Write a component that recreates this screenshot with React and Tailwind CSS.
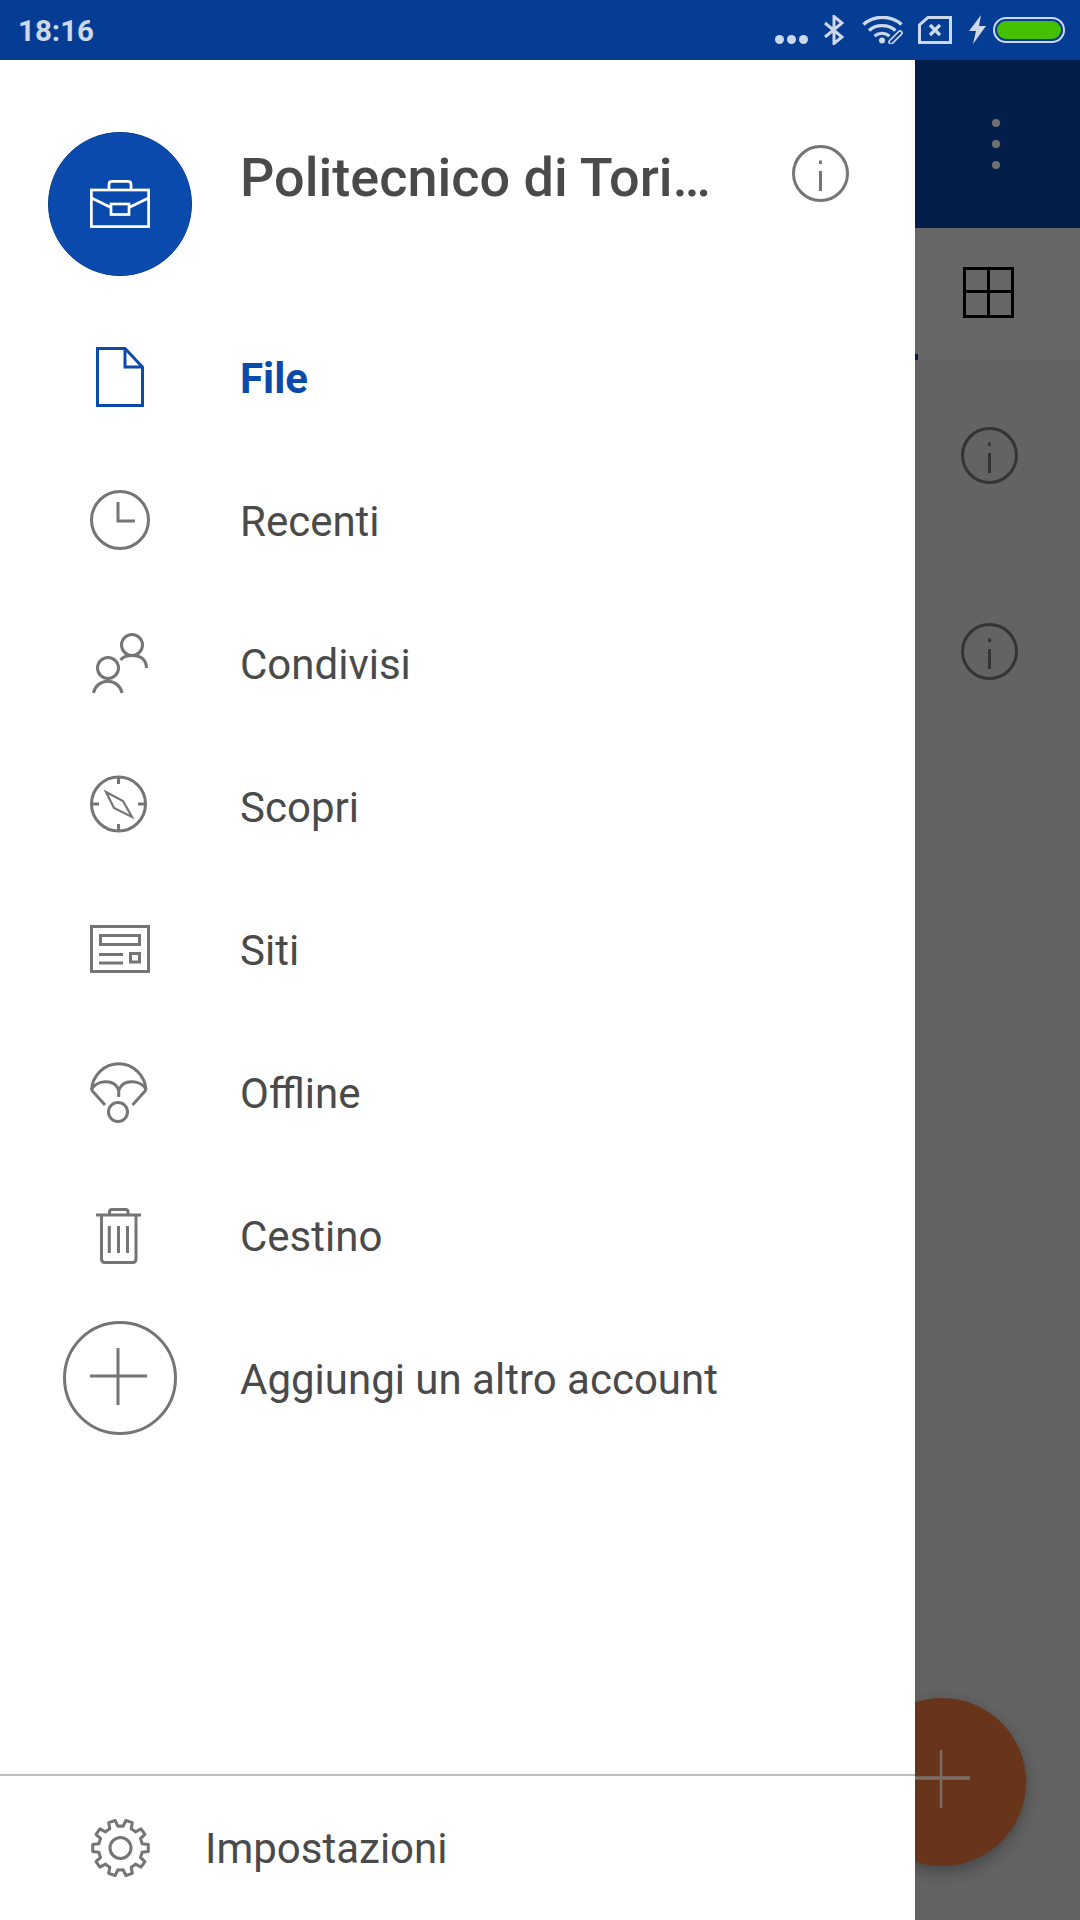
const S = "#757575";

function Ico({ children, stroke = S, sw = 3 }) {
  return (
    <svg viewBox="0 0 144 143" width="144" height="143" fill="none" stroke={stroke} strokeWidth={sw} className="ml-[48px] block shrink-0">
      {children}
    </svg>
  );
}

function gearPath(cx, cy, ro, ri) {
  const pts = [];
  for (let k = 0; k < 10; k++) {
    const c = k * 36 + 18 - 90;
    [[-18, ri], [-11, ri], [-7, ro], [7, ro], [11, ri]].forEach(([d, r]) => {
      const a = ((c + d) * Math.PI) / 180;
      pts.push(`${(cx + r * Math.cos(a)).toFixed(2)} ${(cy + r * Math.sin(a)).toFixed(2)}`);
    });
  }
  return "M" + pts.join("L") + "Z";
}

const items = [
  { label: "File", active: true, icon: (
    <Ico stroke="#0a4aad" sw={3}>
      <path d="M49.5 41.5H77L94.5 60V98.5H49.5Z" />
      <path d="M77 41.5V60H94.5" />
    </Ico>) },
  { label: "Recenti", icon: (
    <Ico>
      <circle cx="72" cy="70" r="28.5" />
      <path d="M70 52V71H87" />
    </Ico>) },
  { label: "Condivisi", icon: (
    <Ico>
      <circle cx="84" cy="52" r="10.5" />
      <path d="M72.5 67Q76 62.5 84 62.5Q98 62.5 98.5 75" />
      <circle cx="60" cy="75" r="10.5" />
      <path d="M45.5 100A14.5 14.5 0 0 1 74 100" />
    </Ico>) },
  { label: "Scopri", icon: (
    <Ico>
      <circle cx="70.5" cy="68" r="27" />
      <path d="M70.5 41V48M70.5 88V96M43.5 68H51M90 68H98" />
      <path d="M58 56L75 65L84 81L66 72Z" strokeWidth="2.2" />
    </Ico>) },
  { label: "Siti", icon: (
    <Ico sw={3}>
      <rect x="43.5" y="47.5" width="57" height="45" />
      <rect x="52.5" y="56.5" width="39" height="9" />
      <path d="M51 75.5H75M51 84H75" />
      <rect x="82.5" y="74.5" width="9" height="8.5" />
    </Ico>) },
  { label: "Offline", icon: (
    <Ico>
      <path d="M43.5 68A27.3 28 0 0 1 98 68" />
      <path d="M43.5 68C48 58 66 56 70.75 68C75.5 56 94 58 98 68" />
      <path d="M70.75 68V75M43.5 68L57 83M98 68L84.5 83" />
      <circle cx="70" cy="90" r="9.5" />
    </Ico>) },
  { label: "Cestino", icon: (
    <Ico>
      <path d="M48 50H93" />
      <path d="M61.5 50V47Q61.5 44.5 64 44.5H77.5Q80 44.5 80 47V50" />
      <path d="M53.5 50V94Q53.5 97.5 57 97.5H84.5Q88 97.5 88 94V50" />
      <path d="M61.3 61V88M70.5 61V88M79.5 61V88" />
    </Ico>) },
  { label: "Aggiungi un altro account", icon: (
    <Ico>
      <circle cx="72" cy="70" r="55.5" />
      <path d="M42 68H99M70 40V97" />
    </Ico>) },
];

function InfoCircle({ color, size = 57 }) {
  return (
    <svg viewBox="0 0 57 57" width={size} height={size} fill="none" stroke={color} strokeWidth="3" className="block">
      <circle cx="28.5" cy="28.5" r="27" />
      <path d="M28.5 26V46M28.5 15.5V19" />
    </svg>
  );
}

function StatusIcons() {
  return (
    <div className="flex items-center">
      <div className="flex gap-[3px] mt-[18px] mr-[16px]">
        <span className="w-[9px] h-[9px] rounded-full bg-[#cdd8ea]" />
        <span className="w-[9px] h-[9px] rounded-full bg-[#cdd8ea]" />
        <span className="w-[9px] h-[9px] rounded-full bg-[#cdd8ea]" />
      </div>
      <svg viewBox="0 0 20 30" width="20" height="30" fill="none" stroke="#cdd8ea" strokeWidth="3" className="mr-[18px]">
        <path d="M1 8L18 22L10 28.5V1.5L18 8L1 22" />
      </svg>
      <svg viewBox="0 0 42 28" width="42" height="28" fill="none" stroke="#cdd8ea" className="mr-[14px]">
        <path d="M1.5 8.5C12 -1 29 -1 39.5 8.5" strokeWidth="3.4" />
        <path d="M7 14.5C14 8 26 8 33.5 14.5" strokeWidth="3.4" />
        <path d="M12.5 20C17 16.5 23 16.5 27.5 20" strokeWidth="3.2" />
        <circle cx="20" cy="24.5" r="3" fill="#cdd8ea" stroke="none" />
        <path d="M29 26L38 17" strokeWidth="5.5" strokeLinecap="round" />
        <path d="M29 26L38 17" strokeWidth="2.4" stroke="#063d94" strokeLinecap="round" />
      </svg>
      <svg viewBox="0 0 34 28" width="34" height="28" fill="none" stroke="#cdd8ea" strokeWidth="3" className="mr-[17px]">
        <path d="M10 1.5H32.5V26.5H1.5V9Z" />
        <path d="M12 9L22 19M22 9L12 19" strokeWidth="3.2" />
      </svg>
      <svg viewBox="0 0 17 30" width="17" height="30" className="mr-[7px]">
        <path d="M12 0L0 16H7L4 29L17 11H10Z" fill="#cdd8ea" />
      </svg>
      <div className="w-[72px] h-[26px] rounded-full border-[2px] border-[#cdd8ea] p-[2px]">
        <div className="w-full h-full rounded-full bg-[#45c000]" />
      </div>
    </div>
  );
}

export default function App() {
  return (
    <div className="relative w-[1080px] h-[1920px] overflow-hidden flex flex-col font-['Roboto',sans-serif]">
      <div className="h-[60px] shrink-0 bg-[#063d94] flex items-center justify-between pl-[18px] pr-[15px]">
        <span className="text-[29.5px] font-bold text-[#cdd8ea] leading-none mt-[3px]">18:16</span>
        <StatusIcons />
      </div>

      <div className="relative flex-1 flex">
        <div className="relative z-10 w-[915px] shrink-0 bg-white flex flex-col">
          <div className="h-[247px] shrink-0 relative flex items-start pt-[72px] pl-[48px]">
            <div className="w-[144px] h-[144px] rounded-full bg-[#0a4aad] border border-[#0a3f94] flex items-center justify-center">
              <svg viewBox="0 0 60 48" width="60" height="48" fill="none" stroke="#fff" strokeWidth="2.7">
                <rect x="1.4" y="10" width="57.2" height="36.6" />
                <path d="M19 10V4.5Q19 1.4 22 1.4H38Q41 1.4 41 4.5V10" />
                <path d="M1.4 18L21 27.5M58.6 18L39 27.5" />
                <rect x="21" y="24" width="18" height="10.5" />
              </svg>
            </div>
            <span className="ml-[48px] mt-[15px] text-[54px] leading-[62px] font-medium text-[#4a4a4a] whitespace-nowrap">Politecnico di Tori…</span>
            <div className="absolute left-[792px] top-[85px]">
              <InfoCircle color={S} />
            </div>
          </div>

          {items.map((it) => (
            <div key={it.label} className="h-[143px] shrink-0 flex items-center">
              <div className="w-[240px] shrink-0">{it.icon}</div>
              <span className={it.active ? "text-[42px] font-bold text-[#0a4aad] leading-none" : "text-[42px] text-[#4a4a4a] leading-none"}>{it.label}</span>
            </div>
          ))}

          <div className="flex-1" />
          <div className="h-[2px] shrink-0 bg-[#bdbdbd]" />
          <div className="h-[144px] shrink-0 flex items-center pl-[91px]">
            <svg viewBox="0 0 60 60" width="60" height="60" fill="none" stroke={S} strokeWidth="3" className="shrink-0">
              <path d={gearPath(29.5, 30, 28, 22)} strokeLinejoin="round" />
              <circle cx="29.5" cy="30" r="10.5" />
            </svg>
            <span className="ml-[54px] text-[42px] text-[#4a4a4a] leading-none mt-[2px]">Impostazioni</span>
          </div>
        </div>

        <div className="flex-1 flex flex-col">
          <div className="h-[168px] shrink-0 bg-[#041e4a] flex flex-col items-center gap-[13px] pt-[59px]">
            <span className="w-[8px] h-[8px] rounded-full bg-[#6f6f6f] ml-[-4px]" />
            <span className="w-[8px] h-[8px] rounded-full bg-[#6f6f6f] ml-[-4px]" />
            <span className="w-[8px] h-[8px] rounded-full bg-[#6f6f6f] ml-[-4px]" />
          </div>
          <div className="relative h-[132px] shrink-0 bg-[#666666] pt-[39px] pl-[48px]">
            <div className="w-[51px] h-[51px] border-[3px] border-black flex flex-wrap relative">
              <div className="absolute left-[21px] top-0 bottom-0 w-[3px] bg-black" />
              <div className="absolute top-[20px] left-0 right-0 h-[2.5px] bg-black" />
            </div>
            <div className="absolute left-0 bottom-0 w-[3px] h-[6px] bg-[#041e4a]" />
          </div>
          <div className="flex-1 bg-[#636363] pl-[46px] pt-[67px] flex flex-col gap-[139px]">
            <InfoCircle color="#343434" />
            <InfoCircle color="#343434" />
          </div>
        </div>

        <div className="absolute left-[858px] top-[1638px] w-[168px] h-[168px] rounded-full bg-[#68351a] shadow-[0_6px_16px_rgba(0,0,0,0.3)] flex items-center justify-center">
          <svg viewBox="0 0 60 60" width="60" height="60" fill="none" stroke="#7a6e66" strokeWidth="2.5" className="ml-[-3px] mt-[-6px]">
            <path d="M1 29H59" strokeWidth="3.5" />
            <path d="M30 1V59" />
          </svg>
        </div>
      </div>
    </div>
  );
}
